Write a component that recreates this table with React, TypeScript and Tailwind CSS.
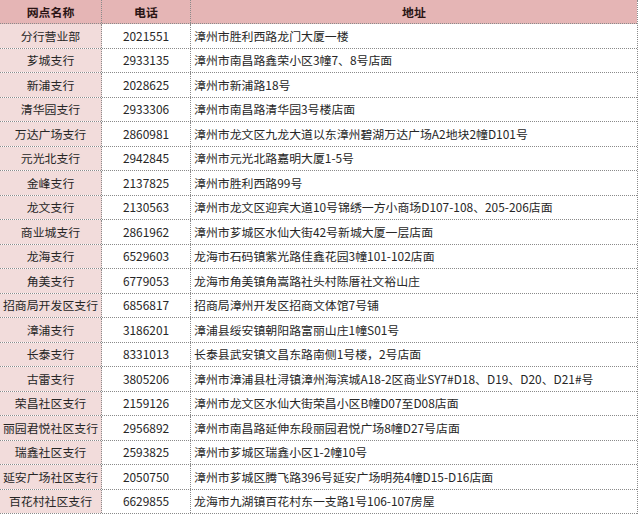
import React from "react";

const rows: [string, string, string][] = [
  ["分行营业部", "2021551", "漳州市胜利西路龙门大厦一楼"],
  ["芗城支行", "2933135", "漳州市南昌路鑫荣小区3幢7、8号店面"],
  ["新浦支行", "2028625", "漳州市新浦路18号"],
  ["清华园支行", "2933306", "漳州市南昌路清华园3号楼店面"],
  ["万达广场支行", "2860981", "漳州市龙文区九龙大道以东漳州碧湖万达广场A2地块2幢D101号"],
  ["元光北支行", "2942845", "漳州市元光北路嘉明大厦1-5号"],
  ["金峰支行", "2137825", "漳州市胜利西路99号"],
  ["龙文支行", "2130563", "漳州市龙文区迎宾大道10号锦绣一方小商场D107-108、205-206店面"],
  ["商业城支行", "2861962", "漳州市芗城区水仙大街42号新城大厦一层店面"],
  ["龙海支行", "6529603", "龙海市石码镇紫光路佳鑫花园3幢101-102店面"],
  ["角美支行", "6779053", "龙海市角美镇角嵩路社头村陈厝社文裕山庄"],
  ["招商局开发区支行", "6856817", "招商局漳州开发区招商文体馆7号铺"],
  ["漳浦支行", "3186201", "漳浦县绥安镇朝阳路富丽山庄1幢S01号"],
  ["长泰支行", "8331013", "长泰县武安镇文昌东路南侧1号楼，2号店面"],
  ["古雷支行", "3805206", "漳州市漳浦县杜浔镇漳州海滨城A18-2区商业SY7#D18、D19、D20、D21#号"],
  ["荣昌社区支行", "2159126", "漳州市龙文区水仙大街荣昌小区B幢D07至D08店面"],
  ["丽园君悦社区支行", "2956892", "漳州市南昌路延伸东段丽园君悦广场8幢D27号店面"],
  ["瑞鑫社区支行", "2593825", "漳州市芗城区瑞鑫小区1-2幢10号"],
  ["延安广场社区支行", "2050750", "漳州市芗城区腾飞路396号延安广场明苑4幢D15-D16店面"],
  ["百花村社区支行", "6629855", "龙海市九湖镇百花村东一支路1号106-107房屋"],
];

const font = {
  fontFamily: '"Noto Sans CJK SC", "Noto Sans", sans-serif',
};

export default function App() {
  return (
    <div
      className="w-[640px] h-[515px] bg-white overflow-hidden text-[11.9px] text-[#262626]"
      style={font}
    >
      <div className="w-[638px] border-r border-dotted border-[#8a8a8a]">
        <div className="grid grid-cols-[102px_89px_1fr] h-[24px] bg-[#e5b5b5] font-bold text-[#2a1414] border-b border-dotted border-[#8a8a8a]">
          <div className="flex items-center justify-center border-r border-dotted border-[#8a8a8a]">
            网点名称
          </div>
          <div className="flex items-center justify-center border-r border-dotted border-[#8a8a8a]">
            电话
          </div>
          <div className="flex items-center justify-center">地址</div>
        </div>
        {rows.map(([name, tel, addr]) => (
          <div
            key={name}
            className="grid grid-cols-[102px_89px_1fr] h-[24.5px] border-b border-dotted border-[#8a8a8a]"
          >
            <div className="flex items-center justify-center bg-[#f2dcdb] border-r border-dotted border-[#8a8a8a] whitespace-nowrap">
              {name}
            </div>
            <div className="flex items-center justify-center border-r border-dotted border-[#8a8a8a]">
              {tel}
            </div>
            <div className="flex items-center pl-[3px] whitespace-nowrap">
              {addr}
            </div>
          </div>
        ))}
      </div>
    </div>
  );
}
